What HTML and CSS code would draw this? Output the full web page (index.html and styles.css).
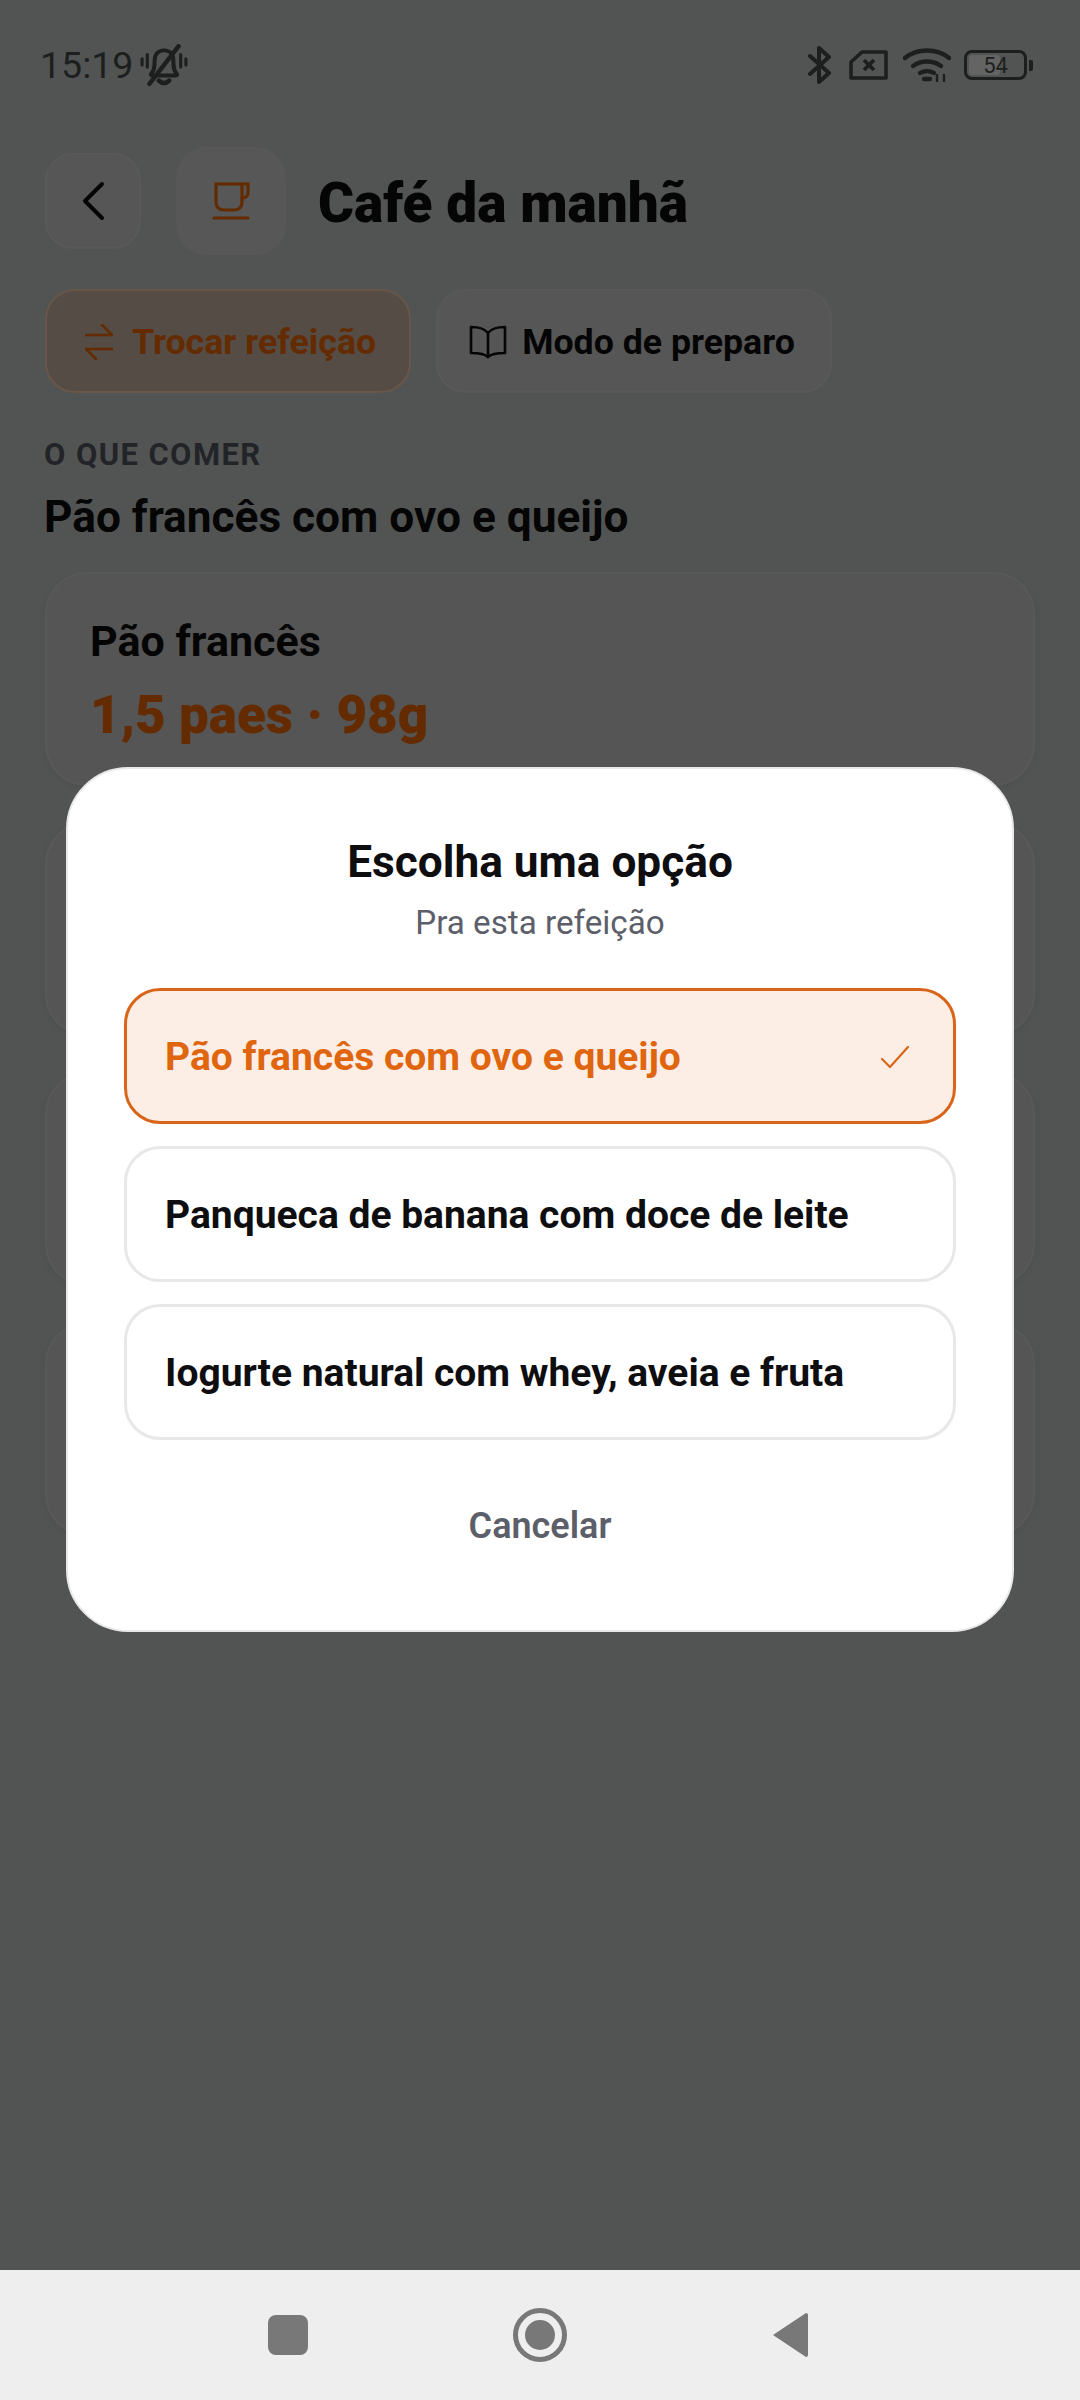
FILE: index.html
```html
<!DOCTYPE html>
<html lang="pt-BR">
<head>
  <meta charset="UTF-8">
  <title>Café da manhã</title>
  <link rel="stylesheet" href="styles.css">
</head>
<body>
  <div class="screen">
    <!-- STATUS BAR -->
    <div class="status">
      <div class="status-left">
        <span class="time">15:19</span>
        <svg class="ic-bell" viewBox="0 0 46 40" fill="none" stroke="#1d1f1f" stroke-width="3.8" stroke-linecap="round">
          <path d="M11 28c3-3 3-7 3-12 0-6 3-10 9-10s9 4 9 10c0 5 0 9 3 12 1 1 1 2-1 2H12c-2 0-2-1-1-2z" />
          <path d="M18 35c3 3 7 3 10 0" stroke-width="4.500" />
          <path d="M37 2 9 38" stroke-width="4.200" />
          <path d="M2 14v6M7 10v12M39 10v12M44 14v6" stroke-width="3" />
        </svg>
      </div>
      <div class="status-right">
        <svg class="ic-bt" viewBox="0 0 24 38" fill="none" stroke="#1d1f1f" stroke-width="4" stroke-linecap="round" stroke-linejoin="round">
          <path d="M2 10 21 27 11 36V2l10 9L2 28" />
        </svg>
        <svg class="ic-sim" viewBox="0 0 40 30" fill="none" stroke="#1d1f1f" stroke-width="3.6" stroke-linejoin="round">
          <path d="M13 2h24v26H2V12z" />
          <path d="M15 10l10 10M25 10 15 20" stroke-width="3.8" />
        </svg>
        <svg class="ic-wifi" viewBox="0 0 48 34" fill="none" stroke="#1d1f1f" stroke-width="4.4" stroke-linecap="round">
          <path d="M2 10c12-10 32-10 44 0" />
          <path d="M10 18c8-6 20-6 28 0" />
          <path d="M17 25c4-2.5 10-2.500 14 0" />
          <path d="M21 31h6" />
          <path d="M34 27v6M41 27v6" stroke-width="2.4" />
        </svg>
        <div class="battery"><span class="battery-fill"></span><span class="battery-num">54</span></div>
        <span class="battery-nub"></span>
      </div>
    </div>

    <!-- PAGE BEHIND THE DIALOG -->
    <div class="page">
      <div class="header">
        <div class="back">
          <svg viewBox="0 0 24 40" width="24" height="40" fill="none" stroke="#050505" stroke-width="4" stroke-linecap="round" stroke-linejoin="round"><path d="M21 3 4 20l17 17" /></svg>
        </div>
        <div class="meal-icon">
          <svg viewBox="0 0 38 38" width="38" height="38" fill="none" stroke="#642b00" stroke-width="3.200" stroke-linecap="round">
            <path d="M4 2h26v18c0 5-3 8-8 8H12c-5 0-8-3-8-8z" />
            <path d="M30 2h6v9c0 3-3 5-6 5" />
            <path d="M2 36h34" />
          </svg>
        </div>
        <h1 class="title">Café da manhã</h1>
      </div>

      <div class="actions">
        <div class="action action-swap">
          <svg viewBox="0 0 28 36" width="28" height="36" fill="none" stroke="#642b00" stroke-width="2.600" stroke-linecap="round" stroke-linejoin="round">
            <path d="M1 11h26M17 1l10 10M27 25H1M11 35 1 25" />
          </svg>
          <span>Trocar refeição</span>
        </div>
        <div class="action">
          <svg viewBox="0 0 38 34" width="38" height="34" fill="none" stroke="#050505" stroke-width="2.600" stroke-linejoin="round">
            <path d="M19 8c-3-4-7-6-17-6v26c10 0 14 1 17 4 3-3 7-4 17-4V2c-10 0-14 2-17 6zM19 8v24" />
          </svg>
          <span>Modo de preparo</span>
        </div>
      </div>

      <div class="eyebrow">O QUE COMER</div>
      <div class="meal-name">Pão francês com ovo e queijo</div>

      <div class="items">
        <div class="item">
          <div class="item-name">Pão francês</div>
          <div class="item-qty">1,5 paes · 98g</div>
        </div>
        <div class="item"></div>
        <div class="item"></div>
        <div class="item"></div>
      </div>
    </div>

    <!-- NAV BAR -->
    <div class="nav">
      <span class="nav-square"></span>
      <span class="nav-home"><span class="nav-dot"></span></span>
      <svg class="nav-back" viewBox="0 0 38 46" width="38" height="46"><path d="M2 23 35 1q2 0 2 2v40q0 2-2 2z" fill="#787878" /></svg>
    </div>

    <!-- DIALOG -->
    <div class="dialog">
      <h2 class="dialog-title">Escolha uma opção</h2>
      <p class="dialog-sub">Pra esta refeição</p>
      <div class="options">
        <div class="option selected">
          <span>Pão francês com ovo e queijo</span>
          <svg viewBox="0 0 30 24" width="30" height="24" fill="none" stroke="#d9651b" stroke-width="2.200" stroke-linecap="round" stroke-linejoin="round"><path d="M2 14l8 8L28 2" /></svg>
        </div>
        <div class="option"><span>Panqueca de banana com doce de leite</span></div>
        <div class="option"><span>Iogurte natural com whey, aveia e fruta</span></div>
      </div>
      <div class="cancel">Cancelar</div>
    </div>
  </div>
</body>
</html>
```

FILE: styles.css
```css
* {
  box-sizing: border-box;
}

body {
  margin: 0;
  font-family: Roboto, "Liberation Sans", sans-serif;
  background: #525453;
}

.screen {
  position: relative;
  width: 1080px;
  height: 2400px;
  display: flex;
  flex-direction: column;
  overflow: hidden;
}

/* status bar */
.status {
  height: 130px;
  padding: 0 47px 0 40px;
  display: flex;
  justify-content: space-between;
  align-items: center;
}

.status-left {
  display: flex;
  align-items: center;
  gap: 7px;
}

.time {
  font-size: 37.500px;
  color: #1d1f1f;
}

.ic-bell {
  width: 48px;
  height: 42px;
}

.status-right {
  display: flex;
  align-items: center;
}

.ic-bt {
  width: 24px;
  height: 38px;
  margin-right: 17px;
}

.ic-sim {
  width: 40px;
  height: 30px;
  margin-right: 14px;
}

.ic-wifi {
  width: 48px;
  height: 34px;
  margin-right: 13px;
}

.battery {
  position: relative;
  width: 63px;
  height: 30px;
  border: 3px solid #1d1f1f;
  border-radius: 8px;
  display: flex;
  justify-content: center;
  align-items: center;
  overflow: hidden;
}

.battery-fill {
  position: absolute;
  left: 2px;
  top: 2px;
  bottom: 2px;
  width: 31px;
  border-radius: 3px;
  background: #646464;
}

.battery-num {
  position: relative;
  font-size: 22px;
  color: #1d1f1f;
}

.battery-nub {
  width: 4px;
  height: 11px;
  margin-left: 2px;
  border-radius: 0 2px 2px 0;
  background: #1d1f1f;
}

/* page behind the dialog, colours are as they look under the scrim */
.page {
  flex: 1;
  padding: 17px 45px 0;
}

.header {
  display: flex;
  align-items: center;
}

.back {
  width: 96px;
  height: 96px;
  margin-right: 35px;
  border: 2px solid #585958;
  border-radius: 28px;
  background: #555655;
  display: flex;
  justify-content: center;
  align-items: center;
}

.meal-icon {
  width: 110px;
  height: 108px;
  margin-right: 32px;
  border-radius: 30px;
  background: #565756;
  display: flex;
  justify-content: center;
  align-items: center;
}

.title {
  margin: 3px 0 0;
  font-size: 55px;
  font-weight: 900;
  color: #050505;
}

.actions {
  display: flex;
  gap: 25px;
  margin-top: 34px;
}

.action {
  height: 104px;
  padding: 2px 35px 0 31px;
  border: 2px solid #585958;
  border-radius: 30px;
  background: #555655;
  display: flex;
  align-items: center;
  gap: 15px;
  font-size: 35.700px;
  font-weight: 700;
  color: #050505;
}

.action-swap {
  padding: 2px 33px 0 38px;
  border-color: #685748;
  background: #554c45;
  color: #642b00;
  gap: 19px;
}

.eyebrow {
  margin-top: 44px;
  margin-left: -1px;
  font-size: 31px;
  line-height: 36px;
  font-weight: 700;
  letter-spacing: 1.4px;
  color: #222428;
}

.meal-name {
  margin-top: 19px;
  margin-left: -1px;
  font-size: 44.200px;
  line-height: 50px;
  font-weight: 700;
  color: #050505;
}

.items {
  margin-top: 30px;
  display: flex;
  flex-direction: column;
  gap: 36px;
}

.item {
  height: 214px;
  padding: 42px 43px;
  border: 2px solid #585958;
  border-radius: 42px;
  background: #555555;
  box-shadow: 0 2px 6px rgba(0, 0, 0, 0.06);
}

.item-name {
  font-size: 43px;
  line-height: 50px;
  font-weight: 700;
  color: #050505;
}

.item-qty {
  margin-top: 19px;
  font-size: 53px;
  line-height: 60px;
  font-weight: 900;
  color: #642b00;
}

/* nav bar */
.nav {
  height: 130px;
  padding: 0 271px 0 268px;
  background: #eeeeee;
  display: flex;
  justify-content: space-between;
  align-items: center;
}

.nav-square {
  width: 40px;
  height: 40px;
  border-radius: 8px;
  background: #787878;
}

.nav-home {
  width: 54px;
  height: 54px;
  border: 5px solid #787878;
  border-radius: 50%;
  display: flex;
  justify-content: center;
  align-items: center;
}

.nav-dot {
  width: 30px;
  height: 30px;
  border-radius: 50%;
  background: #787878;
}

/* dialog */
.dialog {
  position: absolute;
  left: 66px;
  top: 767px;
  width: 948px;
  height: 865px;
  padding: 0 56px;
  border: 2px solid #e8e8e8;
  border-radius: 62px;
  background: #fff;
  text-align: center;
}

.dialog-title {
  margin: 67px 0 0;
  font-size: 44.200px;
  line-height: 52px;
  font-weight: 700;
  color: #0e0e10;
}

.dialog-sub {
  margin: 15px 0 0;
  font-size: 33.200px;
  line-height: 40px;
  color: #5c5f6a;
}

.options {
  margin-top: 45px;
  display: flex;
  flex-direction: column;
  gap: 22px;
}

.option {
  height: 136px;
  padding: 2px 43px 0 38px;
  border: 3px solid #e8e8e8;
  border-radius: 36px;
  display: flex;
  justify-content: space-between;
  align-items: center;
  font-size: 39px;
  font-weight: 700;
  color: #0e0e10;
}

.option.selected {
  border-color: #d9651b;
  background: #fdeee5;
  color: #e0650f;
}

.cancel {
  margin-top: 64px;
  font-size: 36px;
  line-height: 44px;
  font-weight: 600;
  color: #5c5f6a;
}
```
